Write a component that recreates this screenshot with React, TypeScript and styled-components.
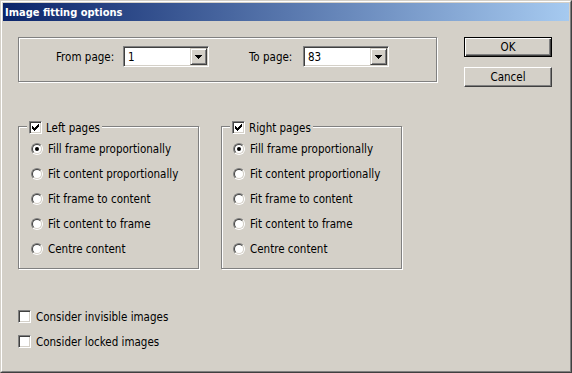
import React from "react";
import styled, { createGlobalStyle, css } from "styled-components";

const Global = createGlobalStyle`
  html, body { margin: 0; padding: 0; background: #d4d0c8; }
  body {
    font-family: "DejaVu Sans Condensed", "Liberation Sans", sans-serif;
    font-size: 11.5px;
    color: #000;
  }
  * { box-sizing: border-box; }
`;

const Window = styled.div`
  width: 572px;
  height: 373px;
  background: #d4d0c8;
  border: 1px solid;
  border-color: #d4d0c8 #404040 #404040 #d4d0c8;
  display: flex;
  flex-direction: column;
`;

const WindowInner = styled.div`
  flex: 1;
  border: 1px solid;
  border-color: #fff #808080 #808080 #fff;
  padding: 1px;
  display: flex;
  flex-direction: column;
`;

const TitleBar = styled.div`
  height: 18px;
  background: linear-gradient(to right, #0a246a, #a6caf0);
  color: #fff;
  font-size: 11px;
  font-weight: bold;
  display: flex;
  align-items: center;
  padding-left: 2px;
`;

const Body = styled.div`
  display: flex;
  align-items: flex-start;
  padding: 16px 0 0 15px;
`;

const Main = styled.div`
  width: 419px;
  display: flex;
  flex-direction: column;
`;

const etched = css`
  border: 1px solid #808080;
  box-shadow: inset 1px 1px 0 #fff, 1px 1px 0 #fff;
`;

const RangeBox = styled.div`
  ${etched};
  height: 45px;
  display: flex;
  align-items: flex-start;
  padding: 8px 0 0 37px;
`;

const Field = styled.div<{ $offset?: number }>`
  display: flex;
  align-items: center;
  gap: 5px;
  margin-left: ${(p) => p.$offset ?? 0}px;
`;

const FieldLabel = styled.span<{ $width: number }>`
  width: ${(p) => p.$width}px;
  white-space: nowrap;
`;

const Combo = styled.div`
  width: 86px;
  height: 21px;
  border: 1px solid;
  border-color: #808080 #fff #fff #808080;
  box-shadow: inset 1px 1px 0 #404040, inset -1px -1px 0 #d4d0c8;
  background: #fff;
  padding: 1px;
  display: flex;
  align-items: stretch;
`;

const ComboValue = styled.span`
  flex: 1;
  display: flex;
  align-items: center;
  padding-left: 3px;
`;

const DropButton = styled.span`
  width: 17px;
  height: 17px;
  background: #d4d0c8;
  border: 1px solid;
  border-color: #d4d0c8 #404040 #404040 #d4d0c8;
  box-shadow: inset 1px 1px 0 #fff, inset -1px -1px 0 #808080;
  display: flex;
  align-items: center;
  justify-content: center;
`;

const Buttons = styled.div`
  margin-left: 27px;
  width: 88px;
  display: flex;
  flex-direction: column;
  gap: 10px;
`;

const PushButton = styled.button<{ $default?: boolean }>`
  width: 88px;
  height: 20px;
  margin: 0;
  padding: 0;
  font: inherit;
  color: #000;
  background: #d4d0c8;
  display: flex;
  align-items: center;
  justify-content: center;
  ${(p) =>
    p.$default
      ? css`
          border: 1px solid #000;
          box-shadow: inset 1px 1px 0 #fff, inset -1px -1px 0 #404040,
            inset -2px -2px 0 #808080;
        `
      : css`
          border: 1px solid;
          border-color: #fff #404040 #404040 #fff;
          box-shadow: inset -1px -1px 0 #808080, inset 1px 1px 0 #d4d0c8;
        `}
`;

const Groups = styled.div`
  display: flex;
  gap: 22px;
  margin-top: 44px;
`;

const GroupBox = styled.div<{ $inset: number }>`
  ${etched};
  position: relative;
  width: 181px;
  height: 143px;
  padding: 9px 0 0 ${(p) => p.$inset}px;
  display: flex;
  flex-direction: column;
`;

const Legend = styled.div`
  position: absolute;
  top: -6px;
  left: 8px;
  padding: 0 2px;
  background: #d4d0c8;
  display: flex;
  align-items: center;
  gap: 4px;
  height: 13px;
`;

const OptionRow = styled.label`
  height: 25px;
  display: flex;
  align-items: center;
  gap: 5px;
`;

const Radio = styled.span<{ $checked?: boolean }>`
  position: relative;
  width: 12px;
  height: 12px;
  flex: none;
  border-radius: 50%;
  border: 1px solid;
  border-color: #808080 #fff #fff #808080;
  &::before {
    content: "";
    position: absolute;
    inset: 0;
    border-radius: 50%;
    border: 1px solid;
    border-color: #404040 #d4d0c8 #d4d0c8 #404040;
    background: #fff;
  }
  &::after {
    content: "";
    position: absolute;
    left: 3px;
    top: 3px;
    width: 4px;
    height: 4px;
    border-radius: 50%;
    background: #000;
    display: ${(p) => (p.$checked ? "block" : "none")};
  }
`;

const CheckBoxBox = styled.span`
  width: 13px;
  height: 13px;
  flex: none;
  border: 1px solid;
  border-color: #808080 #fff #fff #808080;
  box-shadow: inset 1px 1px 0 #404040, inset -1px -1px 0 #d4d0c8;
  background: #fff;
  display: block;
`;

const Options = styled.div`
  margin-top: 41px;
  display: flex;
  flex-direction: column;
  gap: 12px;
`;

const CheckRow = styled.label`
  display: flex;
  align-items: center;
  gap: 5px;
  height: 13px;
`;

const CheckMark = () => (
  <svg width="11" height="11" viewBox="1 1 11 11" shapeRendering="crispEdges">
    <polygon
      fill="#000"
      points="3,5 4,5 4,6 5,6 5,7 6,7 6,6 7,6 7,5 8,5 8,4 9,4 9,3 10,3 10,6 9,6 9,7 8,7 8,8 7,8 7,9 6,9 6,10 5,10 5,9 4,9 4,8 3,8"
    />
  </svg>
);

const CheckBox = ({ checked }: { checked?: boolean }) => (
  <CheckBoxBox>{checked && <CheckMark />}</CheckBoxBox>
);

const Arrow = () => (
  <svg width="7" height="4" viewBox="0 0 7 4" shapeRendering="crispEdges">
    <rect x="0" y="0" width="7" height="1" fill="#000" />
    <rect x="1" y="1" width="5" height="1" fill="#000" />
    <rect x="2" y="2" width="3" height="1" fill="#000" />
    <rect x="3" y="3" width="1" height="1" fill="#000" />
  </svg>
);

const fitOptions = [
  "Fill frame proportionally",
  "Fit content proportionally",
  "Fit frame to content",
  "Fit content to frame",
  "Centre content",
];

const Group = ({ title, inset }: { title: string; inset: number }) => (
  <GroupBox $inset={inset}>
    <Legend>
      <CheckBox checked />
      <span>{title}</span>
    </Legend>
    {fitOptions.map((o, i) => (
      <OptionRow key={o}>
        <Radio $checked={i === 0} />
        <span>{o}</span>
      </OptionRow>
    ))}
  </GroupBox>
);

export default function App() {
  return (
    <>
      <Global />
      <Window>
        <WindowInner>
          <TitleBar>Image fitting options</TitleBar>
          <Body>
            <Main>
              <RangeBox>
                <Field>
                  <FieldLabel $width={62}>From page:</FieldLabel>
                  <Combo>
                    <ComboValue>1</ComboValue>
                    <DropButton>
                      <Arrow />
                    </DropButton>
                  </Combo>
                </Field>
                <Field $offset={40}>
                  <FieldLabel $width={49}>To page:</FieldLabel>
                  <Combo>
                    <ComboValue>83</ComboValue>
                    <DropButton>
                      <Arrow />
                    </DropButton>
                  </Combo>
                </Field>
              </RangeBox>
              <Groups>
                <Group title="Left pages" inset={12} />
                <Group title="Right pages" inset={11} />
              </Groups>
              <Options>
                <CheckRow>
                  <CheckBox />
                  <span>Consider invisible images</span>
                </CheckRow>
                <CheckRow>
                  <CheckBox />
                  <span>Consider locked images</span>
                </CheckRow>
              </Options>
            </Main>
            <Buttons>
              <PushButton $default>OK</PushButton>
              <PushButton>Cancel</PushButton>
            </Buttons>
          </Body>
        </WindowInner>
      </Window>
    </>
  );
}
